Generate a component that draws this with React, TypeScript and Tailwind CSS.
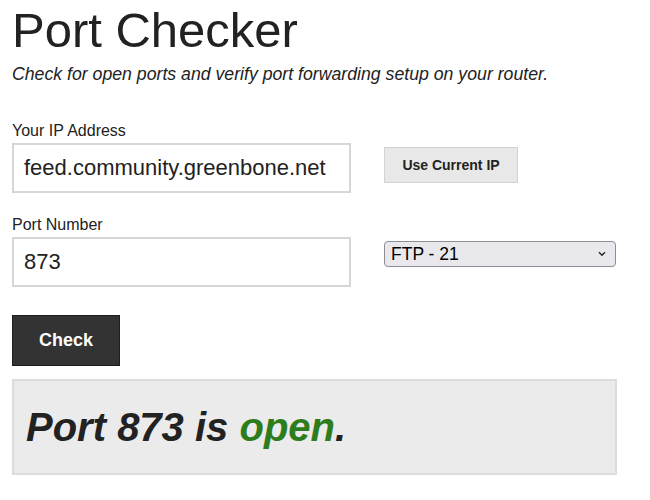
import { useState } from "react";

const services = [
  { label: "FTP - 21", port: "21" },
  { label: "SSH - 22", port: "22" },
  { label: "Telnet - 23", port: "23" },
  { label: "SMTP - 25", port: "25" },
  { label: "HTTP - 80", port: "80" },
  { label: "HTTPS - 443", port: "443" },
];

function Field({
  label,
  value,
  onChange,
  children,
}: {
  label: string;
  value: string;
  onChange: (v: string) => void;
  children: React.ReactNode;
}) {
  return (
    <div className="flex items-start gap-[33px]">
      <div className="flex w-[339px] flex-col gap-[3px]">
        <label className="text-[16px] leading-[19px] text-[#222]">{label}</label>
        <input
          value={value}
          onChange={(e) => onChange(e.target.value)}
          className="h-[50px] w-full border-2 border-[#d6d6d6] bg-white px-[10px] text-[22px] text-[#222] outline-none"
        />
      </div>
      <div className="mt-[26px]">{children}</div>
    </div>
  );
}

export default function App() {
  const [host, setHost] = useState("feed.community.greenbone.net");
  const [port, setPort] = useState("873");
  const [service, setService] = useState("21");

  return (
    <div className="min-h-screen bg-white px-3 pt-[6px] font-['Liberation_Sans',Arial,sans-serif] text-[#222]">
      <h1 className="text-[49px] leading-[48px] font-normal">Port Checker</h1>
      <p className="mt-[9px] text-[17.7px] leading-[22px] italic">
        Check for open ports and verify port forwarding setup on your router.
      </p>

      <div className="mt-[36px] flex flex-col gap-[22px]">
        <Field label="Your IP Address" value={host} onChange={setHost}>
          <button className="h-[36px] w-[134px] border border-[#d2d2d2] bg-[#e8e8e8] text-[14px] font-bold text-[#222]">
            Use Current IP
          </button>
        </Field>

        <Field label="Port Number" value={port} onChange={setPort}>
          <div className="relative w-[232px]">
            <select
              value={service}
              onChange={(e) => {
                setService(e.target.value);
                setPort(e.target.value);
              }}
              className="h-[26px] w-full appearance-none rounded-[4px] border border-[#8e8e95] bg-[#e9e9ed] pl-[6px] text-[17.5px] leading-[24px] text-black outline-none"
            >
              {services.map((s) => (
                <option key={s.port} value={s.port}>
                  {s.label}
                </option>
              ))}
            </select>
            <svg
              className="pointer-events-none absolute right-[10px] top-[10px] h-[6px] w-[8px]"
              viewBox="0 0 8 6"
              fill="none"
              stroke="#222"
              strokeWidth="1.4"
            >
              <path d="M1 1.2l3 3 3-3" />
            </svg>
          </div>
        </Field>
      </div>

      <button className="mt-[28px] h-[51px] w-[108px] border border-[#1e1e1e] bg-[#333] text-[18px] font-bold text-white">
        Check
      </button>

      <div className="mt-[13px] w-[605px] border-2 border-[#dcdcdc] bg-[#ebebeb] py-[22px] pl-[12px]">
        <p className="text-[40px] leading-[48px] font-bold italic text-[#222]">
          Port {port} is <span className="text-[#2e7d1c]">open</span>.
        </p>
      </div>
    </div>
  );
}
